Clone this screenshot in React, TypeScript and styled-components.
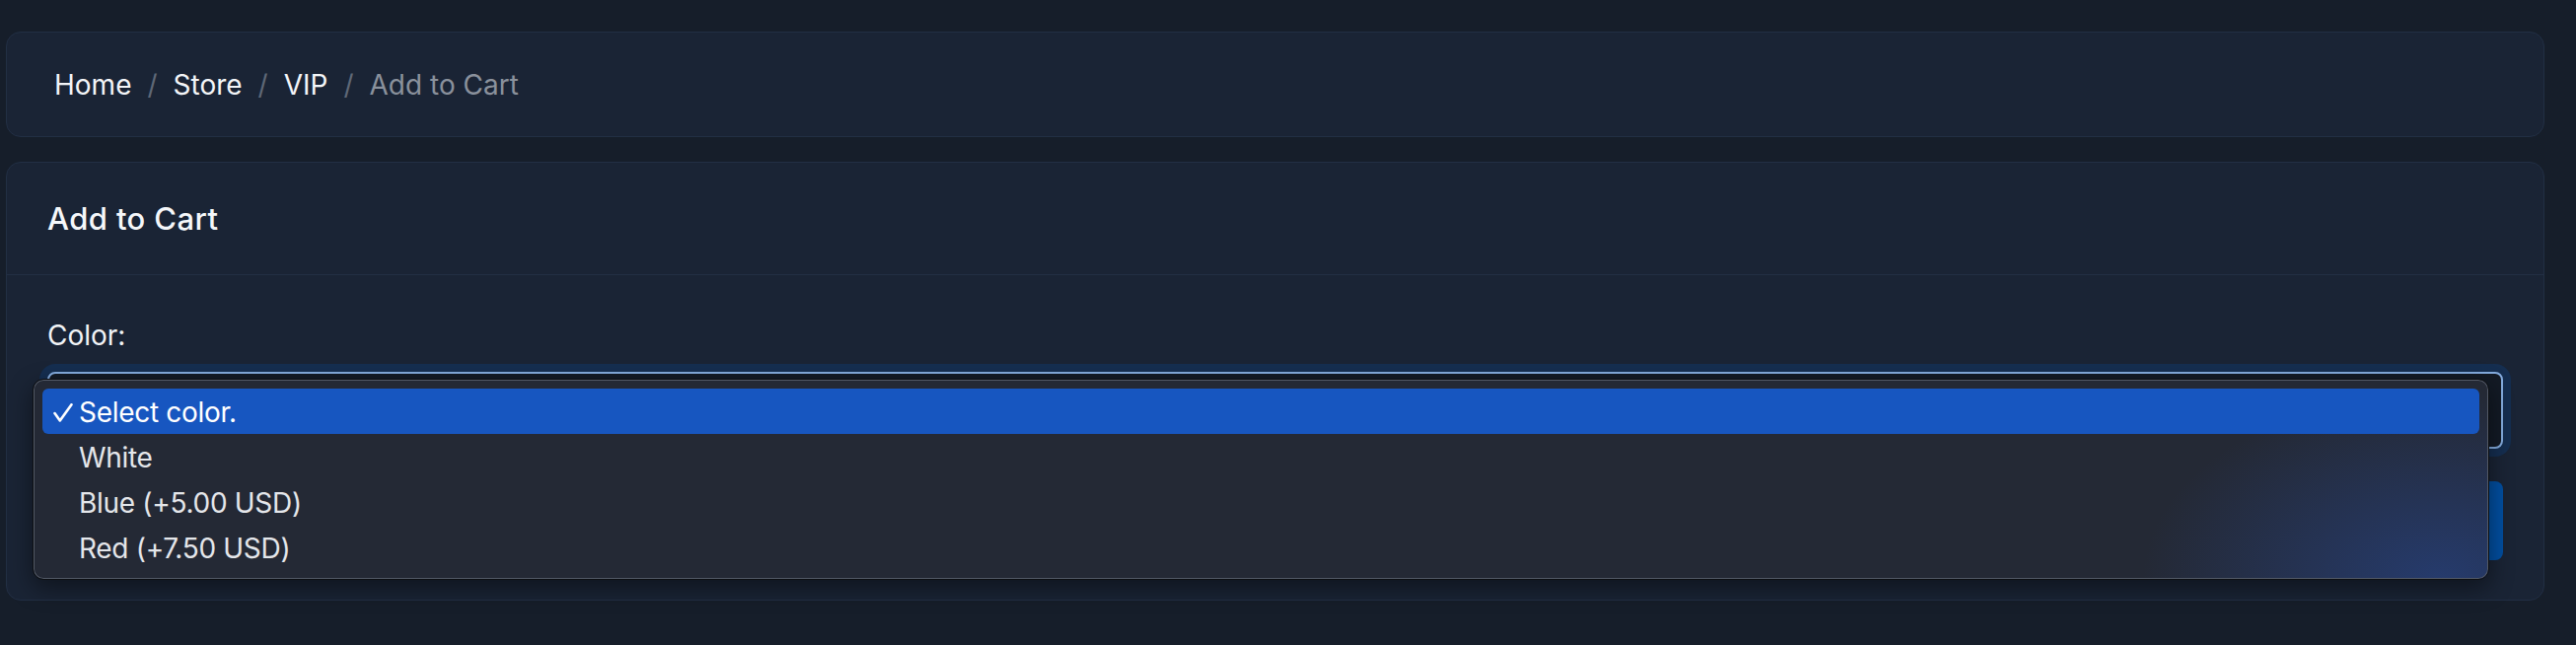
import styled, { createGlobalStyle } from "styled-components";

const GlobalStyle = createGlobalStyle`
  html, body {
    margin: 0;
    background: #161e2a;
    font-family: Inter, "Noto Sans", "Liberation Sans", sans-serif;
    -webkit-font-smoothing: antialiased;
  }
`;

const crumbs = ["Home", "Store", "VIP"];
const options = ["Select color.", "White", "Blue (+5.00 USD)", "Red (+7.50 USD)"];

const App = () => {
  return (
    <>
      <GlobalStyle />
      <Page>
        <Card>
          <Breadcrumb>
            {crumbs.map((c) => (
              <Crumb key={c}>
                <CrumbLink>{c}</CrumbLink>
                <Separator>/</Separator>
              </Crumb>
            ))}
            <CrumbActive>Add to Cart</CrumbActive>
          </Breadcrumb>
        </Card>

        <Card>
          <CardHeader>
            <Title>Add to Cart</Title>
          </CardHeader>
          <CardBody>
            <Label>Color:</Label>
            <SelectWrap>
              {/* the open list covers the closed select's own text */}
              <SelectBox aria-label="Select color." />
              <Menu>
                {options.map((opt, i) => (
                  <MenuItem key={opt} $active={i === 0}>
                    <CheckSlot>
                      {i === 0 && (
                        <svg width="20" height="19" viewBox="0 0 20 19">
                          <polyline
                            points="1.5,10 6.8,17.5 18.5,1.2"
                            fill="none"
                            stroke="#fff"
                            strokeWidth="2.6"
                            strokeLinecap="round"
                            strokeLinejoin="round"
                          />
                        </svg>
                      )}
                    </CheckSlot>
                    {opt}
                  </MenuItem>
                ))}
              </Menu>
            </SelectWrap>
            <SubmitBtn>Add to Cart</SubmitBtn>
          </CardBody>
        </Card>
      </Page>
    </>
  );
};
export default App;

const Page = styled.div`
  display: flex;
  flex-direction: column;
  gap: 25px;
  padding: 32px 32px 40px 6px;
`;

const Card = styled.div`
  background: #1a2435;
  border: 1px solid #222f44;
  border-radius: 15px;
`;

const Breadcrumb = styled.ol`
  display: flex;
  align-items: center;
  list-style: none;
  margin: 0;
  padding: 32px 48px 31px;
  font-size: 28px;
  line-height: 42px;
`;

const Crumb = styled.li`
  display: flex;
`;

const CrumbLink = styled.span`
  color: #f3f5f8;
`;

const Separator = styled.span`
  color: #5f6877;
  padding: 0 16px;
`;

const CrumbActive = styled.li`
  color: #8a919c;
`;

const CardHeader = styled.div`
  padding: 34px 41px 34px;
  border-bottom: 1px solid #222f44;
`;

const Title = styled.h5`
  margin: 0;
  font-size: 31px;
  font-weight: 500;
  line-height: 45px;
  letter-spacing: 0.4px;
  color: #f5f7fa;
`;

const CardBody = styled.div`
  display: flex;
  flex-direction: column;
  padding: 40px 41px 40px;
`;

const Label = styled.label`
  font-size: 28px;
  line-height: 42px;
  color: #f1f3f6;
  margin-bottom: 16px;
`;

const SelectWrap = styled.div`
  position: relative;
  margin-bottom: 33px;
`;

const SelectBox = styled.div`
  height: 74px;
  box-sizing: content-box;
  border: 2px solid #84acdf;
  border-radius: 8px;
  background: #131a25;
  box-shadow: 0 0 0 8px #152e50;
`;

const Menu = styled.div`
  position: absolute;
  z-index: 10;
  top: 7px;
  left: -15px;
  right: 14px;
  padding: 9px;
  border: 1px solid #0d0f13;
  border-radius: 11px;
  background:
    radial-gradient(ellipse 300px 190px at 98% 100%, rgba(38, 62, 118, 0.85), rgba(38, 62, 118, 0) 100%),
    #242935;
  box-shadow: inset 0 0 0 1px #525966, 0 8px 24px rgba(0, 0, 0, 0.45);
`;

const MenuItem = styled.div<{ $active?: boolean }>`
  display: flex;
  align-items: center;
  box-sizing: border-box;
  height: 46px;
  padding: 2px 0 0 11px;
  border-radius: 6px;
  background: ${(p) => (p.$active ? "#1756c0" : "transparent")};
  color: ${(p) => (p.$active ? "#ffffff" : "#e4e6ea")};
  font-size: 28px;
  letter-spacing: -0.3px;
`;

const CheckSlot = styled.span`
  display: flex;
  align-items: center;
  width: 26px;
  height: 44px;
`;

const SubmitBtn = styled.button`
  height: 80px;
  border: none;
  border-radius: 8px;
  background: #024e9f;
  color: #fff;
  font-family: inherit;
  font-size: 28px;
`;
